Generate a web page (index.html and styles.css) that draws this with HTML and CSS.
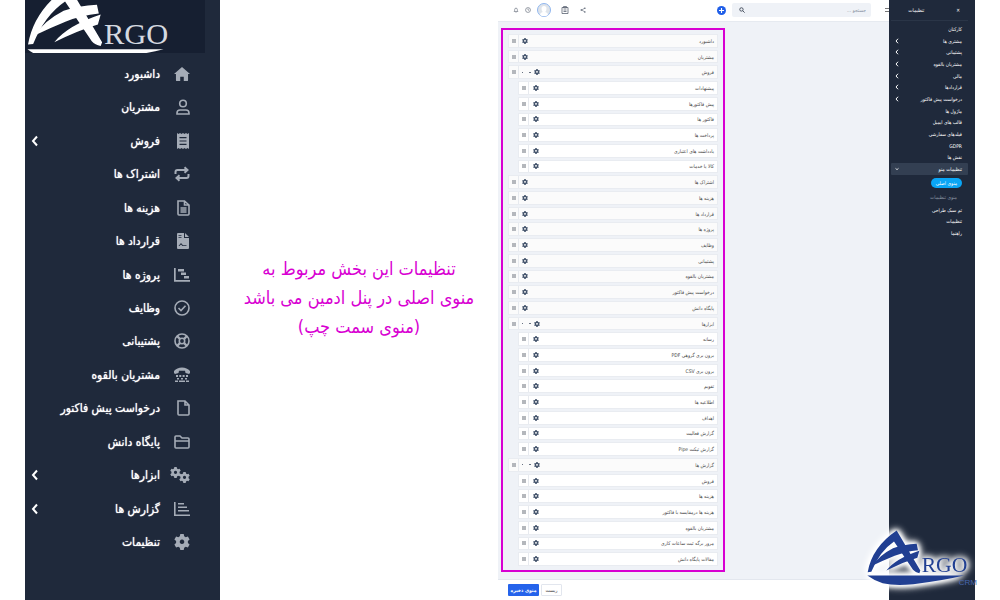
FILE: index.html
```
<!DOCTYPE html>
<html lang="fa">
<head>

	<meta charset="utf-8">
	<meta name="viewport" content="width=device-width"/>

	<title>تنظیمات منو</title>

	<link rel="stylesheet" href="styles.css">

</head>
<body>

	<!-- Icons -->
	<svg class="defs" width="0" height="0">
		<symbol id="home" viewBox="0 0 18 16"><path d="M9 0L0 8h2.200v7q0 1 1 1H7v-5h4v5h3.800q1 0 1-1V8H18z"/></symbol>
		<symbol id="user" viewBox="0 0 16 16"><g class="line"><circle cx="9" cy="4.500" r="3.300"/><path d="M3 15v-1q0-3 3-3h6q3 0 3 3v1z"/></g></symbol>
		<symbol id="receipt" viewBox="0 0 16 16"><path fill-rule="evenodd" d="M3 0l1.500 1L6 0l1.500 1L9 0l1.500 1L12 0l1.500 1L15 0v16l-1.500-1-1.500 1-1.500-1L9 16l-1.500-1L6 16l-1.500-1L3 16zM5.500 4v1.200h7V4zm0 3.400v1.200h7V7.400zm0 3.400V12h7v-1.200z"/></symbol>
		<symbol id="repeat" viewBox="0 0 16 16"><path class="mid" d="M1.500 8V6q0-2 2-2H13M10.500 1.200L13.500 4l-3 2.800M14.500 8v2q0 2-2 2H3M5.500 9.200L2.500 12l3 2.800"/></symbol>
		<symbol id="filetext" viewBox="0 0 16 16"><path class="line" d="M4 1h6.500L15 5v9q0 1-1 1H5q-1 0-1-1zM10.500 1v4H15M6.500 8h6M6.500 10h6M6.500 12h6"/></symbol>
		<symbol id="contract" viewBox="0 0 16 16"><path fill-rule="evenodd" d="M3 1q0-1 1-1h6v5h5v10q0 1-1 1H4q-1 0-1-1zM4.500 2v.8h3V2zm0 2v.8h3V4zm0 9h1l1.500-1.500L8.500 13h4v-.8H9L7 10z"/><path d="M11 0v4h4z"/></symbol>
		<symbol id="gantt" viewBox="0 0 16 16"><path d="M0 1h1.700v12H16v1.700H0zM4 2h6v2.400H4zM7 5.500h5v2.400H7zM10 9h5v2.400h-5z"/></symbol>
		<symbol id="check" viewBox="0 0 16 16"><g class="line"><circle cx="8" cy="8" r="7"/><path d="M4.500 8L7 10.500l4.500-4.800"/></g></symbol>
		<symbol id="ring" viewBox="0 0 16 16"><g class="line"><circle cx="8" cy="8" r="7"/><circle cx="8" cy="8" r="2.700"/></g><path class="thick" d="M3 3l3 3M13 3l-3 3M3 13l3-3M13 13l-3-3"/></symbol>
		<symbol id="tty" viewBox="0 0 16 16"><path d="M0 6V4q3-3.500 8-3.500T16 4v2l-1 1-3.500-1-.5-2.200H5L4.500 6 1 7zM2 8h2v2H2zm3.300 0h2v2h-2zm3.300 0h2v2h-2zM12 8h2v2h-2zM3 11h2v1.500H3zm4 0h2v1.500H7zm4 0h2v1.500h-2zM1 13.500h3V15H1zm4 0h6V15H5zm7 0h3V15h-3z"/></symbol>
		<symbol id="file" viewBox="0 0 16 16"><path class="line" d="M4 1h7l4 4v9q0 1-1 1H5q-1 0-1-1zM11 1v4h4"/></symbol>
		<symbol id="folder" viewBox="0 0 16 16"><path class="line" d="M1 3q0-1 1-1h4l2 2h6q1 0 1 1v8q0 1-1 1H2q-1 0-1-1zM1 7h14"/></symbol>
		<symbol id="cog" viewBox="0 0 16 16"><path fill-rule="evenodd" d="M6.300 0h3.400l.5 2.300 1.500.9 2.200-.8 1.700 3-1.700 1.600v2l1.700 1.600-1.700 3-2.200-.8-1.500.9-.5 2.300H6.300l-.5-2.300-1.500-.9-2.200.8-1.700-3L2.100 9V7L.4 5.400l1.700-3 2.200.8 1.500-.9zM8 5.500a2.300 2.300 0 1 0 .01 0z"/></symbol>
		<symbol id="cogs" viewBox="0 0 20 16"><use href="#cog" x="0" y="0" width="11" height="11"/><use href="#cog" x="9" y="5" width="11" height="11"/></symbol>
		<symbol id="chart" viewBox="0 0 16 16"><path d="M0 1h1.600v12.400H16V15H0zM4 2h6v1.500H4zM4 5.500h9V7H4zM4 9h11v1.500H4z"/></symbol>
		<symbol id="left" viewBox="0 0 8 12"><path class="mid" d="M6 1.500L2 6l4 4.500"/></symbol>
		<symbol id="down" viewBox="0 0 12 8"><path class="thick" d="M1.500 2L6 6l4.500-4"/></symbol>
		<symbol id="bell" viewBox="0 0 16 16"><path class="line" d="M3 12q1.500-1 1.500-5.500a3.500 3.500 0 0 1 7 0Q11.500 11 13 12zM7 14.500h2"/></symbol>
		<symbol id="clock" viewBox="0 0 16 16"><g class="line"><circle cx="8" cy="8" r="6.500"/><path d="M8 4v4l3 1"/></g></symbol>
		<symbol id="clipboard" viewBox="0 0 16 16"><path class="line" d="M2 3h12v12H2zM5 1h6v3H5zM5 8h6M5 11h6"/></symbol>
		<symbol id="share" viewBox="0 0 16 16"><path class="line" d="M13 3L4 8l9 5"/><circle cx="13" cy="3" r="2"/><circle cx="3.500" cy="8" r="2.200"/><circle cx="13" cy="13" r="2"/></symbol>
		<symbol id="search" viewBox="0 0 16 16"><g class="thick"><circle cx="6.500" cy="6.500" r="4.500"/><path d="M10 10l5 5"/></g></symbol>
		<symbol id="plus" viewBox="0 0 16 16"><circle cx="8" cy="8" r="8"/><path d="M8 3.500v9M3.500 8h9" stroke="#fff" stroke-width="2"/></symbol>
		<symbol id="ship" viewBox="0 0 435 270">
			<path d="M83 187Q96 112 170 62L241 182 238 190Q226 188 219 180L162 95Q118 125 94 186z"/>
			<path d="M98 167Q118 136 159 115 190 104 230 102L234 121Q196 125 164 138 130 152 98 167z"/>
			<path d="M139 182Q168 146 238 123L232 144Q186 158 139 182z"/>
			<path d="M82 197H372Q310 212 220 223 165 229 128 220 102 212 82 197z"/>
		</symbol>
	</svg>

	<div class="page">

		<nav class="side">
			<svg class="logo" viewBox="77 92 383 113"><use href="#ship" width="435" height="270"/><text x="245" y="186" font-size="65">RGO</text></svg>
			<ul>
				<li><svg><use href="#home"/></svg><a href="#">داشبورد</a></li>
				<li><svg><use href="#user"/></svg><a href="#">مشتریان</a></li>
				<li><svg><use href="#receipt"/></svg><a href="#">فروش</a><svg class="arrow"><use href="#left"/></svg></li>
				<li><svg><use href="#repeat"/></svg><a href="#">اشتراک ها</a></li>
				<li><svg><use href="#filetext"/></svg><a href="#">هزینه ها</a></li>
				<li><svg><use href="#contract"/></svg><a href="#">قرارداد ها</a></li>
				<li><svg><use href="#gantt"/></svg><a href="#">پروژه ها</a></li>
				<li><svg><use href="#check"/></svg><a href="#">وظایف</a></li>
				<li><svg><use href="#ring"/></svg><a href="#">پشتیبانی</a></li>
				<li><svg><use href="#tty"/></svg><a href="#">مشتریان بالقوه</a></li>
				<li><svg><use href="#file"/></svg><a href="#">درخواست پیش فاکتور</a></li>
				<li><svg><use href="#folder"/></svg><a href="#">پایگاه دانش</a></li>
				<li><svg class="wide"><use href="#cogs"/></svg><a href="#">ابزارها</a><svg class="arrow"><use href="#left"/></svg></li>
				<li><svg><use href="#chart"/></svg><a href="#">گزارش ها</a><svg class="arrow"><use href="#left"/></svg></li>
				<li><svg><use href="#cog"/></svg><a href="#">تنظیمات</a></li>
			</ul>
		</nav>

		<p class="note">تنظیمات این بخش مربوط به<br>منوی اصلی در پنل ادمین می باشد<br>(منوی سمت چپ)</p>

		<div class="admin">

			<div class="main">

				<header class="top">
					<button class="ico" aria-label="اعلان ها"><svg><use href="#bell"/></svg></button>
					<button class="ico" aria-label="زمان"><svg><use href="#clock"/></svg></button>
					<svg class="avatar" viewBox="0 0 14 14"><circle cx="7" cy="7" r="6.500" fill="#dfe4ea" stroke="#8fb6ee"/><path d="M3 12q0-2.500 2.700-3Q4.500 7.500 4.500 5.500 4.500 3 7 3t2.500 2.500Q9.500 7.500 8.300 9q2.700.5 2.700 3-4 2.500-8 0z" fill="#fff"/></svg>
					<button class="ico big" aria-label="کارها"><svg><use href="#clipboard"/></svg></button>
					<button class="ico" aria-label="اشتراک گذاری"><svg><use href="#share"/></svg></button>
					<button class="add" aria-label="افزودن"><svg><use href="#plus"/></svg></button>
					<label class="search"><svg><use href="#search"/></svg><input type="text" aria-label="جستجو" placeholder="جستجو ..."></label>
					<span class="burger"></span>
				</header>

				<div class="content">
					<ul class="menu">
						<li><span>داشبورد</span><button aria-label="ویرایش"><svg><use href="#cog"/></svg></button><i></i></li>
						<li><span>مشتریان</span><button aria-label="ویرایش"><svg><use href="#cog"/></svg></button><i></i></li>
						<li class="parent"><span>فروش</span><button aria-label="ویرایش"><svg><use href="#cog"/></svg></button><b></b><i></i></li>
						<li class="sub"><span>پیشنهادات</span><button aria-label="ویرایش"><svg><use href="#cog"/></svg></button><i></i></li>
						<li class="sub"><span>پیش فاکتورها</span><button aria-label="ویرایش"><svg><use href="#cog"/></svg></button><i></i></li>
						<li class="sub"><span>فاکتور ها</span><button aria-label="ویرایش"><svg><use href="#cog"/></svg></button><i></i></li>
						<li class="sub"><span>پرداخت ها</span><button aria-label="ویرایش"><svg><use href="#cog"/></svg></button><i></i></li>
						<li class="sub"><span>یادداشت های اعتباری</span><button aria-label="ویرایش"><svg><use href="#cog"/></svg></button><i></i></li>
						<li class="sub"><span>کالا یا خدمات</span><button aria-label="ویرایش"><svg><use href="#cog"/></svg></button><i></i></li>
						<li><span>اشتراک ها</span><button aria-label="ویرایش"><svg><use href="#cog"/></svg></button><i></i></li>
						<li><span>هزینه ها</span><button aria-label="ویرایش"><svg><use href="#cog"/></svg></button><i></i></li>
						<li><span>قرارداد ها</span><button aria-label="ویرایش"><svg><use href="#cog"/></svg></button><i></i></li>
						<li><span>پروژه ها</span><button aria-label="ویرایش"><svg><use href="#cog"/></svg></button><i></i></li>
						<li><span>وظایف</span><button aria-label="ویرایش"><svg><use href="#cog"/></svg></button><i></i></li>
						<li><span>پشتیبانی</span><button aria-label="ویرایش"><svg><use href="#cog"/></svg></button><i></i></li>
						<li><span>مشتریان بالقوه</span><button aria-label="ویرایش"><svg><use href="#cog"/></svg></button><i></i></li>
						<li><span>درخواست پیش فاکتور</span><button aria-label="ویرایش"><svg><use href="#cog"/></svg></button><i></i></li>
						<li><span>پایگاه دانش</span><button aria-label="ویرایش"><svg><use href="#cog"/></svg></button><i></i></li>
						<li class="parent"><span>ابزارها</span><button aria-label="ویرایش"><svg><use href="#cog"/></svg></button><b></b><i></i></li>
						<li class="sub"><span>رسانه</span><button aria-label="ویرایش"><svg><use href="#cog"/></svg></button><i></i></li>
						<li class="sub"><span>برون بری گروهی PDF</span><button aria-label="ویرایش"><svg><use href="#cog"/></svg></button><i></i></li>
						<li class="sub"><span>برون بری CSV</span><button aria-label="ویرایش"><svg><use href="#cog"/></svg></button><i></i></li>
						<li class="sub"><span>تقویم</span><button aria-label="ویرایش"><svg><use href="#cog"/></svg></button><i></i></li>
						<li class="sub"><span>اطلاعیه ها</span><button aria-label="ویرایش"><svg><use href="#cog"/></svg></button><i></i></li>
						<li class="sub"><span>اهداف</span><button aria-label="ویرایش"><svg><use href="#cog"/></svg></button><i></i></li>
						<li class="sub"><span>گزارش فعالیت</span><button aria-label="ویرایش"><svg><use href="#cog"/></svg></button><i></i></li>
						<li class="sub"><span>گزارش تیکت Pipe</span><button aria-label="ویرایش"><svg><use href="#cog"/></svg></button><i></i></li>
						<li class="parent"><span>گزارش ها</span><button aria-label="ویرایش"><svg><use href="#cog"/></svg></button><b></b><i></i></li>
						<li class="sub"><span>فروش</span><button aria-label="ویرایش"><svg><use href="#cog"/></svg></button><i></i></li>
						<li class="sub"><span>هزینه ها</span><button aria-label="ویرایش"><svg><use href="#cog"/></svg></button><i></i></li>
						<li class="sub"><span>هزینه ها درمقایسه با فاکتور</span><button aria-label="ویرایش"><svg><use href="#cog"/></svg></button><i></i></li>
						<li class="sub"><span>مشتریان بالقوه</span><button aria-label="ویرایش"><svg><use href="#cog"/></svg></button><i></i></li>
						<li class="sub"><span>مرور برگه ثبت ساعات کاری</span><button aria-label="ویرایش"><svg><use href="#cog"/></svg></button><i></i></li>
						<li class="sub"><span>مقالات پایگاه دانش</span><button aria-label="ویرایش"><svg><use href="#cog"/></svg></button><i></i></li>
					</ul>
				</div>

				<footer class="bottom">
					<button class="save">منوی ذخیره</button>
					<button class="reset">ریست</button>
				</footer>

			</div>

			<nav class="setup">
				<h2><button aria-label="بستن">✕</button>تنظیمات</h2>
				<ul class="links">
					<li><a href="#">کارکنان</a></li>
					<li><a href="#">مشتری ها</a><svg><use href="#left"/></svg></li>
					<li><a href="#">پشتیبانی</a><svg><use href="#left"/></svg></li>
					<li><a href="#">مشتریان بالقوه</a><svg><use href="#left"/></svg></li>
					<li><a href="#">مالی</a><svg><use href="#left"/></svg></li>
					<li><a href="#">قراردادها</a><svg><use href="#left"/></svg></li>
					<li><a href="#">درخواست پیش فاکتور</a><svg><use href="#left"/></svg></li>
					<li><a href="#">ماژول ها</a></li>
					<li><a href="#">قالب های ایمیل</a></li>
					<li><a href="#">فیلدهای سفارشی</a></li>
					<li><a href="#">GDPR</a></li>
					<li><a href="#">نقش ها</a></li>
					<li class="open"><a href="#">تنظیمات منو</a><svg><use href="#down"/></svg></li>
				</ul>
				<a class="pill" href="#">منوی اصلی</a>
				<a class="dim" href="#">منوی تنظیمات</a>
				<ul class="links last">
					<li><a href="#">تم سبک طراحی</a></li>
					<li><a href="#">تنظیمات</a></li>
					<li><a href="#">راهنما</a></li>
				</ul>
			</nav>

			<svg class="brand" viewBox="60 40 375 200"><g class="glow"><use href="#ship" width="435" height="270"/><text x="245" y="186" font-size="65">RGO</text></g><text class="crm" x="356" y="227" font-size="24">CRM</text></svg>

		</div>

	</div>

</body>
</html>
```

FILE: styles.css
```
* {
	margin: 0;
	padding: 0;
	box-sizing: border-box;
}

body {
	font: 12px "DejaVu Sans Condensed", "DejaVu Sans", sans-serif;
	background: #fff;
}

ul {
	list-style: none;
}

a {
	color: inherit;
	text-decoration: none;
}

button {
	border: 0;
	background: none;
	color: inherit;
	font-family: inherit;
	cursor: pointer;
}

svg {
	display: block;
	fill: currentColor;
}

.defs {
	position: absolute;
}

.line, .mid, .thick {
	fill: none;
	stroke: currentColor;
	stroke-width: 1.6;
}

.mid {
	stroke-width: 2;
}

.thick {
	stroke-width: 2.4;
}

.logo text, .brand text {
	font-family: "Liberation Serif", serif;
}


.page {
	display: flex;
	min-height: 100vh;
	padding: 0 25px;
}


/* Menu principal */

.side {
	display: flex;
	flex-direction: column;
	flex: 0 0 195px;
	padding-bottom: 41px;
	background: #1f293b;
	color: #fff;
}

.logo {
	width: 180px;
	height: 53px;
	margin-bottom: 4px;
	background: #161f31;
}

.logo text {
	fill: #d5d9e0;
}

.side ul {
	display: flex;
	flex-direction: column;
	flex: 1;
	direction: rtl;
}

.side li {
	display: flex;
	align-items: center;
	flex: 1;
	padding: 0 30px 0 5px;
}

.side li svg {
	width: 16px;
	height: 16px;
	margin-left: 14px;
	color: #a5acb7;
}

.side li .wide {
	width: 20px;
	margin-left: 10px;
}

.side a {
	flex: 1;
	text-shadow: 0 0 1px #fff;
}

.side li .arrow {
	width: 10px;
	height: 12px;
	margin-left: 0;
	color: #fff;
}


.note {
	flex: 1;
	align-self: center;
	padding-bottom: 6px;
	direction: rtl;
	text-align: center;
	font-size: 18px;
	line-height: 29px;
	color: #d800d2;
}


/* Administration */

.admin {
	position: relative;
	display: flex;
	flex: 0 0 477px;
	font-size: 5px;
}

.main {
	display: flex;
	flex-direction: column;
	flex: 1;
	background: #eff2f7;
}

.top {
	display: flex;
	align-items: center;
	gap: 6px;
	height: 21px;
	padding: 0 0 1px 15px;
	background: #fff;
	color: #5a6372;
}

.ico svg {
	width: 6px;
	height: 6px;
}

.big {
	margin: 0 5px 0 4px;
}

.big svg {
	width: 8px;
	height: 8px;
}

.avatar {
	width: 14px;
	height: 14px;
}

.add {
	margin-left: auto;
	color: #1f5ee8;
}

.add svg {
	width: 9px;
	height: 9px;
}

.search {
	position: relative;
	flex: 0 0 139px;
	margin-right: 8px;
	color: #3c4655;
}

.search svg {
	position: absolute;
	left: 7px;
	top: 4px;
	width: 6px;
	height: 6px;
}

.search input {
	display: block;
	width: 100%;
	height: 14px;
	padding: 0 5px 0 16px;
	border: 0;
	border-radius: 2px;
	background: #eff2f7;
	direction: rtl;
	font: 5px "DejaVu Sans Condensed", "DejaVu Sans", sans-serif;
}

.search input::placeholder {
	color: #8993a3;
}

.burger {
	width: 4px;
	height: 4px;
	border-top: 1px solid #777;
	border-bottom: 1px solid #777;
}

.content {
	display: flex;
	flex: 1;
	padding: 6px 3px 7px;
	border-top: 1px solid #e6eaf0;
	border-bottom: 1px solid #e3e7ee;
}

.menu {
	display: flex;
	flex-direction: column;
	gap: 2px;
	width: 224px;
	padding: 4px 5px;
	border: 2px solid #d800d2;
	direction: rtl;
}

.menu li {
	display: flex;
	align-items: center;
	flex: 1;
	padding-right: 3px;
	border: 1px solid #e9ecf1;
	background: #fbfbfb;
	color: #444;
}

.menu .sub {
	margin-left: 10px;
	background: #fff;
}

.menu span {
	flex: 1;
}

.menu button {
	margin-left: 3px;
	color: #43536b;
}

.menu .sub button {
	margin-left: 4px;
}

.menu svg {
	width: 6px;
	height: 6px;
}

/* poignée */
.menu i {
	align-self: stretch;
	width: 10px;
	border-right: 1px solid #e7eaef;
	background: linear-gradient(#b4b7bc, #b4b7bc) center / 4px 4px no-repeat;
}

.menu b {
	width: 9px;
	height: 1px;
	margin-left: 3px;
	border: solid #687282;
	border-width: 0 2px 0 1px;
}

.bottom {
	display: flex;
	align-items: center;
	gap: 2px;
	height: 20px;
	padding-left: 10px;
	background: #fff;
}

.bottom button {
	height: 12px;
	border-radius: 1px;
	font-size: 5px;
}

.bottom .save {
	width: 31px;
	background: #2563eb;
	color: #fff;
	font-weight: bold;
}

.bottom .reset {
	width: 21px;
	border: 1px solid #e2e6ee;
	color: #444;
}


/* Menu des parametres */

.setup {
	flex: 0 0 86px;
	padding: 0 7px 0 2px;
	background: #1f293b;
	color: #fff;
	direction: rtl;
}

.setup h2 {
	display: flex;
	align-items: center;
	gap: 32px;
	height: 21px;
	margin-bottom: 2px;
	border-bottom: 1px solid #2a3547;
	font-size: 5px;
	font-weight: normal;
}

.setup h2 button {
	padding-right: 8px;
	font-size: 5px;
}

.links {
	display: grid;
	grid-auto-rows: 1fr;
	height: 152px;
}

.links.last {
	height: 35px;
}

.links li {
	display: flex;
	align-items: center;
	justify-content: space-between;
	padding: 0 6px 0 4px;
}

.links svg {
	width: 4px;
	height: 6px;
}

.links .open {
	border-radius: 1px;
	background: #333f52;
}

.pill, .dim {
	display: block;
	width: 31px;
	height: 10px;
	margin: 3px 6px 4px 0;
	line-height: 10px;
	text-align: center;
}

.pill {
	border-radius: 5px;
	background: #0aa5f5;
}

.dim {
	width: auto;
	margin-right: 11px;
	margin-bottom: 2px;
	text-align: right;
	color: #8b94a3;
}


.brand {
	position: absolute;
	right: -10px;
	bottom: 10px;
	width: 125px;
	height: 67px;
	overflow: visible;
	color: #213f92;
}

.glow {
	filter: drop-shadow(0 0 8px #fff) drop-shadow(0 0 10px #fff) drop-shadow(0 0 8px #fff);
}

.brand .crm {
	font-family: "Liberation Sans", sans-serif;
	fill: #4766ad;
}
```
